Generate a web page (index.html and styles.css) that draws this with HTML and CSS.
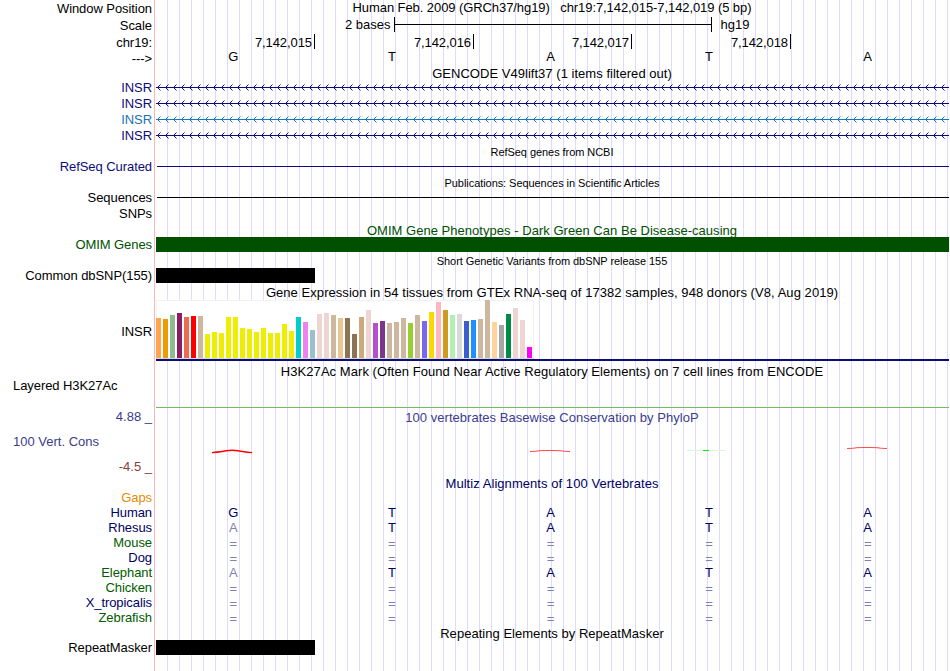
FILE: index.html
```html
<!DOCTYPE html>
<html lang="en">
<head>
  <meta charset="UTF-8">
  <title>Human chr19:7,142,015-7,142,019 - Genome Browser hg19</title>
  <link rel="stylesheet" href="styles.css">
</head>
<body>
  <main class="browser">

    <!-- Ruler -->
    <div class="row row-position">
      <div class="label">Window Position</div>
      <div class="data title tight">Human Feb. 2009 (GRCh37/hg19) &nbsp; chr19:7,142,015-7,142,019 (5 bp)</div>
    </div>
    <div class="row row-scale">
      <div class="label">Scale</div>
      <div class="data scale">
        <span class="scale-size">2 bases</span>
        <span class="scale-bar"></span>
        <span>hg19</span>
      </div>
    </div>
    <div class="row row-ticks">
      <div class="label">chr19:</div>
      <div class="data ticks">
        <span>7,142,015</span><span>7,142,016</span><span>7,142,017</span><span>7,142,018</span>
      </div>
    </div>
    <div class="row row-bases">
      <div class="label">---&gt;</div>
      <div class="data bases"><span>G</span><span>T</span><span>A</span><span>T</span><span>A</span></div>
    </div>

    <!-- GENCODE -->
    <div class="row row-gencode-title"><div class="data title">GENCODE V49lift37 (1 items filtered out)</div></div>
    <div class="row row-gene navy"><div class="label">INSR</div><div class="data"><div class="intron"></div></div></div>
    <div class="row row-gene navy"><div class="label">INSR</div><div class="data"><div class="intron"></div></div></div>
    <div class="row row-gene blue"><div class="label">INSR</div><div class="data"><div class="intron intron-blue"></div></div></div>
    <div class="row row-gene navy"><div class="label">INSR</div><div class="data"><div class="intron"></div></div></div>

    <!-- RefSeq -->
    <div class="row row-small-title"><div class="data title small">RefSeq genes from NCBI</div></div>
    <div class="row row-gene navy"><div class="label">RefSeq Curated</div><div class="data"><div class="line"></div></div></div>

    <!-- Publications -->
    <div class="row row-small-title"><div class="data title small">Publications: Sequences in Scientific Articles</div></div>
    <div class="row row-gene"><div class="label">Sequences</div><div class="data"><div class="line"></div></div></div>
    <div class="row row-gene"><div class="label">SNPs</div></div>

    <!-- OMIM -->
    <div class="row row-title green"><div class="data title">OMIM Gene Phenotypes - Dark Green Can Be Disease-causing</div></div>
    <div class="row row-block green"><div class="label">OMIM Genes</div><div class="data"><div class="block"></div></div></div>

    <!-- dbSNP -->
    <div class="row row-snp-title"><div class="data title small">Short Genetic Variants from dbSNP release 155</div></div>
    <div class="row row-block"><div class="label">Common dbSNP(155)</div><div class="data"><div class="block block-base"></div></div></div>

    <!-- GTEx -->
    <div class="row row-gtex-title"><div class="data title wide">Gene Expression in 54 tissues from GTEx RNA-seq of 17382 samples, 948 donors (V8, Aug 2019)</div></div>
    <div class="row row-gtex">
      <div class="label">INSR</div>
      <div class="data gtex">
        <div class="bars">
          <i style="height:40px;background:#ffa54f"></i>
          <i style="height:39px;background:#ee9a00"></i>
          <i style="height:43px;background:#8fbc8f"></i>
          <i style="height:45px;background:#8b1c62"></i>
          <i style="height:41px;background:#ee6a50"></i>
          <i style="height:42px;background:#ff0000"></i>
          <i style="height:42px;background:#cdb79e"></i>
          <i style="height:24px;background:#eeee00"></i>
          <i style="height:26px;background:#eeee00"></i>
          <i style="height:25px;background:#eeee00"></i>
          <i style="height:41px;background:#eeee00"></i>
          <i style="height:41px;background:#eeee00"></i>
          <i style="height:30px;background:#eeee00"></i>
          <i style="height:29px;background:#eeee00"></i>
          <i style="height:26px;background:#eeee00"></i>
          <i style="height:30px;background:#eeee00"></i>
          <i style="height:25px;background:#eeee00"></i>
          <i style="height:25px;background:#eeee00"></i>
          <i style="height:34px;background:#eeee00"></i>
          <i style="height:27px;background:#eeee00"></i>
          <i style="height:41px;background:#00cdcd"></i>
          <i style="height:36px;background:#ee82ee"></i>
          <i style="height:28px;background:#9ac0cd"></i>
          <i style="height:44px;background:#eed5d2"></i>
          <i style="height:45px;background:#eed5d2"></i>
          <i style="height:43px;background:#cdb79e"></i>
          <i style="height:40px;background:#eec591"></i>
          <i style="height:40px;background:#8b7355"></i>
          <i style="height:24px;background:#8b7355"></i>
          <i style="height:41px;background:#cdaa7d"></i>
          <i style="height:48px;background:#eed5d2"></i>
          <i style="height:35px;background:#b452cd"></i>
          <i style="height:37px;background:#7a378b"></i>
          <i style="height:35px;background:#cdb79e"></i>
          <i style="height:36px;background:#cdb79e"></i>
          <i style="height:40px;background:#cdb79e"></i>
          <i style="height:35px;background:#9acd32"></i>
          <i style="height:43px;background:#cdb79e"></i>
          <i style="height:37px;background:#7a67ee"></i>
          <i style="height:46px;background:#ffd700"></i>
          <i style="height:56px;background:#ffb6c1"></i>
          <i style="height:48px;background:#cd9b1d"></i>
          <i style="height:43px;background:#b4eeb4"></i>
          <i style="height:44px;background:#d9d9d9"></i>
          <i style="height:37px;background:#3a5fcd"></i>
          <i style="height:38px;background:#1e90ff"></i>
          <i style="height:39px;background:#cdb79e"></i>
          <i style="height:58px;background:#cdb79e"></i>
          <i style="height:36px;background:#ffd39b"></i>
          <i style="height:33px;background:#a6a6a6"></i>
          <i style="height:44px;background:#008b45"></i>
          <i style="height:50px;background:#eed5d2"></i>
          <i style="height:38px;background:#eed5d2"></i>
          <i style="height:11px;background:#ff00ff"></i>
        </div>
      </div>
    </div>

    <!-- H3K27Ac -->
    <div class="row row-h3k-title"><div class="data title wide">H3K27Ac Mark (Often Found Near Active Regulatory Elements) on 7 cell lines from ENCODE</div></div>
    <div class="row row-h3k"><div class="label label-left">Layered H3K27Ac</div><div class="data"><div class="signal"></div></div></div>

    <!-- PhyloP -->
    <div class="row row-cons">
      <div class="label cons-labels">
        <span class="cons-max">4.88 _</span>
        <span class="cons-name">100 Vert. Cons</span>
        <span class="cons-min">-4.5 _</span>
      </div>
      <div class="data cons-data">
        <div class="title">100 vertebrates Basewise Conservation by PhyloP</div>
        <svg class="wiggle" width="794" height="20" viewBox="155 440 794 20" fill="none">
          <path d="M212 452.6 Q222 451.8 226 450.8 Q232 449.8 238 450.8 Q243 451.8 252 452.6" stroke="#f00" stroke-width="1.4"/>
          <path d="M530 451.5 Q536 451.5 540 450.7 Q550 450.2 560 450.7 Q564 451.5 570 451.5" stroke="#f33" stroke-width=".9"/>
          <path d="M687 450.5H725" stroke="#d8f8d8"/>
          <path d="M703 450.5H709" stroke="#0e0"/>
          <path d="M847 448.5 Q853 448.5 857 447.7 Q867 447.2 877 447.7 Q881 448.5 887 448.5" stroke="#f33" stroke-width=".9"/>
        </svg>
      </div>
    </div>

    <!-- Multiz -->
    <div class="row row-title deep"><div class="data title wide">Multiz Alignments of 100 Vertebrates</div></div>
    <div class="row row-species gaps"><div class="label">Gaps</div></div>
    <div class="row row-species deep"><div class="label">Human</div><div class="data bases"><span>G</span><span>T</span><span>A</span><span>T</span><span>A</span></div></div>
    <div class="row row-species deep"><div class="label">Rhesus</div><div class="data bases"><span class="diff">A</span><span>T</span><span>A</span><span>T</span><span>A</span></div></div>
    <div class="row row-species leaf"><div class="label">Mouse</div><div class="data bases missing"><span>=</span><span>=</span><span>=</span><span>=</span><span>=</span></div></div>
    <div class="row row-species deep"><div class="label">Dog</div><div class="data bases missing"><span>=</span><span>=</span><span>=</span><span>=</span><span>=</span></div></div>
    <div class="row row-species leaf"><div class="label">Elephant</div><div class="data bases deep"><span class="diff">A</span><span>T</span><span>A</span><span>T</span><span>A</span></div></div>
    <div class="row row-species leaf"><div class="label">Chicken</div><div class="data bases missing"><span>=</span><span>=</span><span>=</span><span>=</span><span>=</span></div></div>
    <div class="row row-species deep"><div class="label">X_tropicalis</div><div class="data bases missing"><span>=</span><span>=</span><span>=</span><span>=</span><span>=</span></div></div>
    <div class="row row-species leaf"><div class="label">Zebrafish</div><div class="data bases missing"><span>=</span><span>=</span><span>=</span><span>=</span><span>=</span></div></div>

    <!-- RepeatMasker -->
    <div class="row row-rmsk-title"><div class="data title">Repeating Elements by RepeatMasker</div></div>
    <div class="row row-block"><div class="label">RepeatMasker</div><div class="data"><div class="block block-base"></div></div></div>
  </main>
</body>
</html>
```
FILE: styles.css
```css
* {
  margin: 0;
  padding: 0;
  box-sizing: border-box;
}

body {
  background: #fff;
  color: #000;
  font-family: "Liberation Sans", Arial, sans-serif;
  font-size: 13px;
  line-height: 15px;
  overflow: hidden;
}

/* pink label divider, then a guide line every 12px */
.browser {
  width: 949px;
  height: 671px;
  background:
    linear-gradient(#ffb4b4, #ffb4b4) 154px 0 / 1px 100% no-repeat,
    repeating-linear-gradient(to right, #dcdcff 0 1px, transparent 1px 12px) 167px 0 / 782px 100% no-repeat;
}

.row {
  display: grid;
  grid-template-columns: 155px 794px;
  white-space: nowrap;
}

.label {
  grid-column: 1;
  text-align: right;
  padding-right: 3px;
  letter-spacing: -0.07px;
}

.label-left {
  text-align: left;
  padding-left: 13px;
}

.data {
  grid-column: 2;
}

.title {
  text-align: center;
  letter-spacing: 0.03px;
}

.wide {
  letter-spacing: 0.055px;
}

.tight {
  letter-spacing: -0.08px;
}

.small {
  font-size: 11px;
  letter-spacing: -0.06px;
}

/* track colours */
.navy { color: #0c0c78; }
.blue { color: #1874b4; }
.green { color: #005000; }
.deep { color: #000064; }
.leaf { color: #005a00; }
.gaps { color: #e68a00; }

/* row heights */
.row-position { height: 17px; }
.row-position .label { padding-top: 1px; }
.row-scale { height: 16px; }
.row-scale .label { padding-top: 1px; }
.row-ticks { height: 16px; }
.row-ticks .label { padding-top: 2px; }
.row-bases { height: 16px; }
.row-bases .label { padding-top: 2px; }
.row-gencode-title { height: 14px; padding-top: 1px; }
.row-gene { height: 16px; }
.row-gene .label { padding-top: 1px; }
.row-small-title { height: 15px; padding-top: 2px; }
.row-title { height: 16px; padding-top: 2px; }
.row-block { height: 15px; }
.row-snp-title { height: 16px; padding-top: 2px; }
.row-gtex-title { height: 17px; padding-top: 2px; }
.row-gtex { height: 61px; }
.row-gtex .label { padding-top: 24px; }
.row-h3k-title { height: 17px; padding-top: 3px; }
.row-h3k { height: 30px; }
.row-cons { height: 66px; }
.row-species { height: 15px; }
.row-rmsk-title { height: 15px; padding-top: 1px; }

/* ruler */
.scale {
  display: flex;
  padding-left: 190px;
}

.scale-bar {
  width: 318px;
  height: 15px;
  margin: 0 9px 0 3px;
  border: solid #000;
  border-width: 0 1px;
  background: linear-gradient(#000, #000) 0 7px / 100% 1px no-repeat;
}

.ticks {
  display: grid;
  grid-template-columns: 160px 159px 158px 159px;
  padding-top: 1px;
  letter-spacing: -0.08px;
}

.ticks span {
  height: 15px;
  padding: 1px 2px 0 0;
  border-right: 1px solid #000;
  text-align: right;
}

.bases {
  display: grid;
  grid-template-columns: repeat(5, 158.6px);
  margin-left: -1px;
  text-align: center;
}

/* gene models */
.intron {
  height: 7px;
  margin: 5px 0 0 1px;
  background: url("data:image/svg+xml,%3Csvg xmlns='http://www.w3.org/2000/svg' width='8' height='7' shape-rendering='crispEdges'%3E%3Cpath fill='%230c0c78' d='M0 3h8v1H0zM2 2h1v1H2zM2 4h1v1H2zM3 1h1v1H3zM3 5h1v1H3z'/%3E%3Cpath fill='%230c0c78' opacity='.5' d='M4 0h1v1H4zM4 6h1v1H4z'/%3E%3C/svg%3E") repeat-x;
}

.intron-blue {
  background-image: url("data:image/svg+xml,%3Csvg xmlns='http://www.w3.org/2000/svg' width='8' height='7' shape-rendering='crispEdges'%3E%3Cpath fill='%231874b4' d='M0 3h8v1H0zM2 2h1v1H2zM2 4h1v1H2zM3 1h1v1H3zM3 5h1v1H3z'/%3E%3Cpath fill='%231874b4' opacity='.5' d='M4 0h1v1H4zM4 6h1v1H4z'/%3E%3C/svg%3E");
}

.line {
  height: 1px;
  margin: 8px 0 0 2px;
  background: currentColor;
}

.block {
  height: 15px;
  margin-left: 1px;
  background: currentColor;
}

.block-base {
  width: 159px;
}

/* GTEx bar chart */
.gtex {
  padding-left: 1px;
}

.bars {
  display: flex;
  align-items: flex-end;
  gap: 2px;
  width: 378px;
  height: 59px;
  background: #fff;
  border-bottom: 1px solid #d8d8d8;
  box-shadow: inset 1px 1px #f2f2f2, inset -1px 0 #f2f2f2;
}

.bars i {
  width: 5px;
}

.gtex::after {
  content: "";
  display: block;
  height: 2px;
  background: #0c0c78;
}

.signal {
  height: 1px;
  margin: 29px 0 0 1px;
  background: #76bb60;
}

/* conservation */
.cons-labels {
  display: flex;
  flex-direction: column;
  padding-top: 1px;
  color: #3c3c8c;
  letter-spacing: 0;
}

.cons-name {
  margin: 10px 0;
  padding-left: 13px;
  text-align: left;
}

.cons-min {
  color: #8c3c3c;
}

.cons-data {
  padding-top: 2px;
  color: #3c3c8c;
}

.wiggle {
  display: block;
  margin-top: 15px;
}

/* alignments */
.diff,
.missing {
  color: #8080b2;
}

.missing {
  padding-top: 1px;
}
```
